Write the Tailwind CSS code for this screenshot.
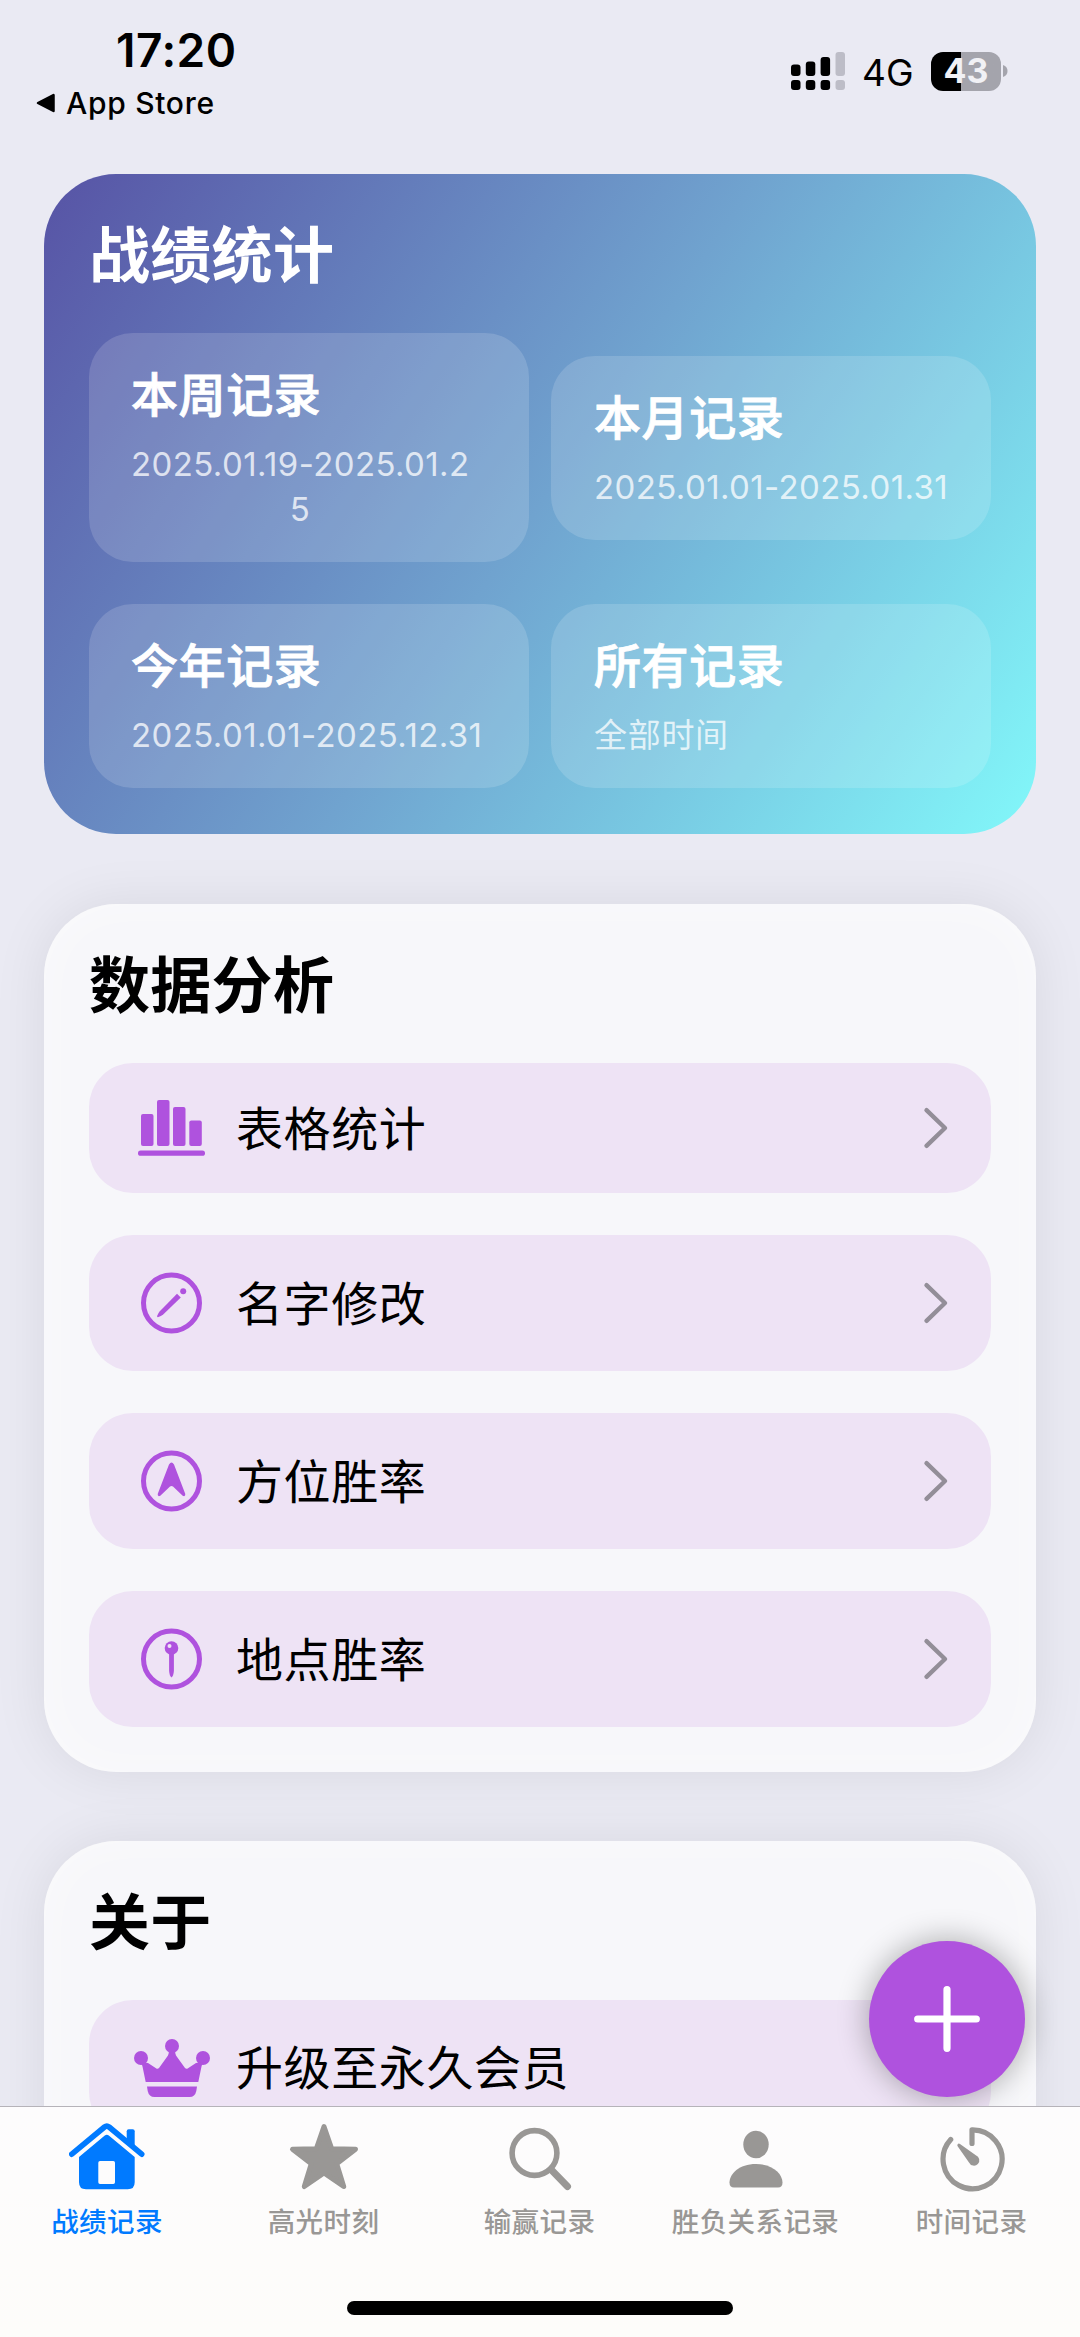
<!DOCTYPE html>
<html lang="zh-CN">
<head>
<meta charset="utf-8">
<title>战绩记录</title>
<script src="https://cdn.jsdelivr.net/npm/@tailwindcss/browser@4"></script>
</head>
<body class="bg-[#eaeaf3]">
<div class="relative flex h-[2337px] w-[1080px] flex-col overflow-hidden bg-[#eaeaf3] font-['Inter','Noto_Sans_CJK_SC',sans-serif] text-black">

  <!-- Scrolling content with status bar -->
  <div class="flex h-[2106px] shrink-0 flex-col overflow-hidden">
    <header class="flex h-[174px] shrink-0 justify-between pl-[35px] pr-[72px]">
      <div class="flex flex-col pt-[25px]">
        <div class="pl-[81px] text-[46px] font-semibold leading-[50px] tracking-[0.5px]">17:20</div>
        <div class="mt-[10px] flex items-center gap-[11px] text-[30px] font-medium leading-[36px] tracking-[0.7px]">
          <svg class="h-[20px] w-[20px]" viewBox="0 0 20 20"><path d="M18.500 2v16L3 10z" fill="#000" stroke="#000" stroke-width="2.500" stroke-linejoin="round"/></svg>
          <span>App Store</span>
        </div>
      </div>
      <div class="mt-[52px] flex h-[38px] items-center">
        <svg class="h-[38px] w-[54px]" viewBox="0 0 54 38">
          <g fill="#000"><rect x="0" y="12.500" width="9.500" height="11.500" rx="3"/><rect x="14.800" y="9.500" width="9.500" height="14.500" rx="3"/><rect x="29.600" y="5" width="9.500" height="19" rx="3"/><rect x="0" y="28" width="9.500" height="10" rx="3"/><rect x="14.800" y="28" width="9.500" height="10" rx="3"/><rect x="29.600" y="28" width="9.500" height="10" rx="3"/></g>
          <g fill="#bdbdc7"><rect x="44.500" y="0" width="9.500" height="24" rx="3"/><rect x="44.500" y="28" width="9.500" height="10" rx="3"/></g>
        </svg>
        <span class="ml-[17px] w-[52px] pt-[4px] text-[37px] leading-[38px]">4G</span>
        <div class="ml-[17px] flex items-center gap-[2px]">
          <div class="flex h-[39px] w-[70px] items-center justify-center rounded-[12px] bg-linear-to-r from-black from-[43%] to-[#a4a4ac] to-[43%] text-[34px] font-bold leading-[38px] text-[#f1f1f5]">43</div>
          <svg class="h-[12px] w-[5px]" viewBox="0 0 5 12"><path d="M0 0c3 .8 4.500 3.200 4.500 6S3 11.200 0 12z" fill="#a4a4ac"/></svg>
        </div>
      </div>
    </header>

    <main class="flex flex-col px-[44px]">
      <!-- Record summary -->
      <section class="h-[660px] rounded-[72px] bg-[linear-gradient(123.7deg,#5753a5_0%,#70a3cf_50%,#82f8fa_100%)] px-[45px] pt-[52px] text-white">
        <h2 class="text-[61px] font-bold leading-[61px] tracking-[0.3px]">战绩统计</h2>
        <div class="mt-[46px] grid grid-cols-2 grid-rows-[229px_184px] items-center gap-x-[22px] gap-y-[42px]">
          <div class="h-[229px] rounded-[44px] bg-white/15 pl-[42px] pt-[38px]">
            <h3 class="text-[47px] font-medium leading-[47px] tracking-[0.6px] [-webkit-text-stroke:0.9px_white]">本周记录</h3>
            <p class="mt-[24px] w-[338px] whitespace-nowrap text-center text-[33px] leading-[44.500px] tracking-[0.4px] text-white/75">2025.01.19-2025.01.2<br>5</p>
          </div>
          <div class="h-[184px] rounded-[44px] bg-white/15 pl-[43px] pt-[38px]">
            <h3 class="text-[47px] font-medium leading-[47px] tracking-[0.6px] [-webkit-text-stroke:0.9px_white]">本月记录</h3>
            <p class="mt-[24px] whitespace-nowrap text-[33px] leading-[44px] tracking-[0.4px] text-white/75">2025.01.01-2025.01.31</p>
          </div>
          <div class="h-[184px] rounded-[44px] bg-white/15 pl-[42px] pt-[38px]">
            <h3 class="text-[47px] font-medium leading-[47px] tracking-[0.6px] [-webkit-text-stroke:0.9px_white]">今年记录</h3>
            <p class="mt-[24px] whitespace-nowrap text-[33px] leading-[44px] tracking-[0.4px] text-white/75">2025.01.01-2025.12.31</p>
          </div>
          <div class="h-[184px] rounded-[44px] bg-white/15 pl-[43px] pt-[38px]">
            <h3 class="text-[47px] font-medium leading-[47px] tracking-[0.6px] [-webkit-text-stroke:0.9px_white]">所有记录</h3>
            <p class="mt-[24px] text-[33px] leading-[44px] tracking-[0.7px] text-white/75">全部时间</p>
          </div>
        </div>
      </section>

      <!-- Data analysis -->
      <section class="mt-[69.500px] rounded-[72px] bg-[#f7f7fa] px-[45px] pb-[45px] pt-[52px] shadow-[0_0_54px_rgba(0,0,0,0.08),inset_0_0_50px_rgba(255,255,255,0.45)]">
        <h2 class="text-[61px] font-bold leading-[61px] tracking-[0.3px]">数据分析</h2>
        <div class="mt-[46.500px] flex flex-col gap-[42px] text-[47px] tracking-[0.6px]">
          <a class="flex h-[130px] items-center rounded-[44px] bg-[#eee3f5] pl-[49px] pr-[42px]">
            <svg class="h-[56px] w-[67px]" viewBox="0 0 67 56" fill="#af52de"><rect x="3" y="14" width="12.500" height="32" rx="2"/><rect x="19" y="0" width="12.500" height="46" rx="2"/><rect x="35" y="7" width="12.500" height="39" rx="2"/><rect x="51.300" y="20.500" width="12.500" height="25.500" rx="2"/><rect x="0" y="50.500" width="67" height="5.300" rx="2.600"/></svg>
            <span class="ml-[31px] flex-1 pt-[2px] leading-[60px]">表格统计</span>
            <svg class="h-[44px] w-[26px]" viewBox="0 0 26 44"><path d="M3.500 4.200 22 22 3.500 39.800" fill="none" stroke="#938e98" stroke-width="4.400" stroke-linecap="round" stroke-linejoin="round"/></svg>
          </a>
          <a class="flex h-[136px] items-center rounded-[44px] bg-[#eee3f5] pl-[49px] pr-[42px]">
            <svg class="h-[62px] w-[67px]" viewBox="0 0 67 62" fill="#af52de"><circle cx="33.500" cy="31" r="28" fill="none" stroke="#af52de" stroke-width="5"/><path d="M39 21.700 42.800 25.400 25.200 42.400Q23 44.300 20.400 45.100Q18.600 45.500 19.200 43.800Q20.200 41 21.800 39.200Z"/><circle cx="45.200" cy="19.200" r="3"/></svg>
            <span class="ml-[31px] flex-1 pt-[2px] leading-[60px]">名字修改</span>
            <svg class="h-[44px] w-[26px]" viewBox="0 0 26 44"><path d="M3.500 4.200 22 22 3.500 39.800" fill="none" stroke="#938e98" stroke-width="4.400" stroke-linecap="round" stroke-linejoin="round"/></svg>
          </a>
          <a class="flex h-[136px] items-center rounded-[44px] bg-[#eee3f5] pl-[49px] pr-[42px]">
            <svg class="h-[62px] w-[67px]" viewBox="0 0 67 62" fill="#af52de"><circle cx="33.500" cy="31" r="28" fill="none" stroke="#af52de" stroke-width="5"/><path d="M31 14.500Q33.500 10.500 36 14.500L47.300 44Q47.500 47 44.700 45.800L35 36.500Q33.500 35.300 32 36.500L22.300 45.800Q19.500 47 19.700 44Z"/></svg>
            <span class="ml-[31px] flex-1 pt-[2px] leading-[60px]">方位胜率</span>
            <svg class="h-[44px] w-[26px]" viewBox="0 0 26 44"><path d="M3.500 4.200 22 22 3.500 39.800" fill="none" stroke="#938e98" stroke-width="4.400" stroke-linecap="round" stroke-linejoin="round"/></svg>
          </a>
          <a class="flex h-[136px] items-center rounded-[44px] bg-[#eee3f5] pl-[49px] pr-[42px]">
            <svg class="h-[62px] w-[67px]" viewBox="0 0 67 62" fill="#af52de"><circle cx="33.500" cy="31" r="28" fill="none" stroke="#af52de" stroke-width="5"/><circle cx="33.500" cy="20" r="6.800"/><circle cx="31.500" cy="18" r="2" fill="#eee3f5"/><path d="M31.100 25H35.900V43Q35.500 48 33.500 49.500Q31.500 48 31.100 43Z"/></svg>
            <span class="ml-[31px] flex-1 pt-[2px] leading-[60px]">地点胜率</span>
            <svg class="h-[44px] w-[26px]" viewBox="0 0 26 44"><path d="M3.500 4.200 22 22 3.500 39.800" fill="none" stroke="#938e98" stroke-width="4.400" stroke-linecap="round" stroke-linejoin="round"/></svg>
          </a>
        </div>
      </section>

      <!-- About -->
      <section class="mt-[69px] h-[420px] rounded-[72px] bg-[#f7f7fa] px-[45px] pt-[52px] shadow-[0_0_54px_rgba(0,0,0,0.08),inset_0_0_50px_rgba(255,255,255,0.45)]">
        <h2 class="text-[61px] font-bold leading-[61px] tracking-[0.3px]">关于</h2>
        <a class="mt-[46px] flex h-[136px] items-center rounded-[44px] bg-[#eee3f5] pl-[45px] pr-[42px] text-[47px] tracking-[0.6px]">
          <svg class="h-[58px] w-[76px]" viewBox="0 0 76 58" fill="#af52de"><circle cx="38" cy="7" r="7"/><circle cx="7" cy="19" r="7"/><circle cx="69" cy="19" r="7"/><path d="M35 11H41Q41 14.500 42 16.500L51 29Q52.300 30.500 54 29.300L62 24 69 23Q68 25.500 67.500 27.500L64.300 43H11.700L8.500 27.500Q8 25.500 7 23L14 24 22 29.300Q23.700 30.500 25 29L34 16.500Q35 14.500 35 11Z"/><path d="M13 47.500H63L62.300 52Q61 58 55.500 58H20.500Q15 58 13.700 52Z"/></svg>
          <span class="ml-[26px] flex-1 leading-[60px]">升级至永久会员</span>
        </a>
      </section>
    </main>
  </div>

  <!-- Add button -->
  <button class="absolute left-[869px] top-[1941px] flex size-[156px] items-center justify-center rounded-full bg-[#af52de] shadow-[0_0_32px_rgba(0,0,0,0.33)]">
    <svg class="size-[66px]" viewBox="0 0 66 66"><path d="M33 3.700V62.300M3.700 33H62.300" stroke="#fff" stroke-width="7.200" stroke-linecap="round"/></svg>
  </button>

  <!-- Tab bar -->
  <nav class="relative flex h-[231px] flex-col items-center border-t border-[#b5b3b9] bg-[linear-gradient(180deg,#fdfcfd,#fdfcfa)]">
    <div class="grid w-full grid-cols-5 text-[27.500px] font-medium leading-[36px] tracking-[0.4px] text-[#999795]">
      <div class="flex flex-col items-center pr-[2px] text-[#007aff]">
        <svg class="mt-[15px] h-[70px] w-[76px]" viewBox="0 0 76 70" fill="#007aff"><path d="M2.800 32.200 35.500 5Q37.800 3.200 40.100 5L72.700 32.200" fill="none" stroke="#007aff" stroke-width="5.600" stroke-linecap="round" stroke-linejoin="round"/><path d="M57.700 9.300Q57.700 7.300 59.700 7.300H63.700Q65.700 7.300 65.700 9.300V25L57.700 19Z"/><path fill-rule="evenodd" d="M35.800 13.600Q37.800 12 39.800 13.600L65.700 35V60.300Q65.700 67.300 58.700 67.300H17Q10 67.300 10 60.300V35ZM31 39Q29.300 39 29.300 40.700V60.300Q29.300 62 31 62H44.300Q46 62 46 60.300V40.700Q46 39 44.300 39Z"/></svg>
        <span class="mt-[12px]">战绩记录</span>
      </div>
      <div class="flex flex-col items-center pr-px">
        <svg class="mt-[15px] h-[70px] w-[72px]" viewBox="0 0 72 70" fill="#999795"><path d="M36 4.500 43.700 26.800 67.500 27.200 48.700 41.700 55.700 64.500 36 51 16.300 64.500 23.300 41.700 4.500 27.200 28.300 26.800Z" stroke="#999795" stroke-width="5" stroke-linejoin="round"/></svg>
        <span class="mt-[12px]">高光时刻</span>
      </div>
      <div class="flex flex-col items-center pr-px">
        <svg class="mt-[15px] h-[70px] w-[64px]" viewBox="0 0 64 70" fill="none" stroke="#999795" stroke-linecap="round"><circle cx="26.500" cy="31" r="22.400" stroke-width="5.600"/><path d="M43.500 48 59.500 64.500" stroke-width="7"/></svg>
        <span class="mt-[12px]">输赢记录</span>
      </div>
      <div class="flex flex-col items-center pr-px">
        <svg class="mt-[15px] h-[70px] w-[54px]" viewBox="0 0 54 70" fill="#999795"><ellipse cx="27" cy="22.500" rx="12.700" ry="13.700"/><path d="M.5 60.500C.5 52 10 42 27 42S53.500 52 53.500 60.500Q53.500 65.500 49 65.500H5Q.5 65.500.5 60.500Z"/></svg>
        <span class="mt-[12px]">胜负关系记录</span>
      </div>
      <div class="flex flex-col items-center pr-px">
        <svg class="mt-[15px] h-[70px] w-[66px]" viewBox="0 0 66 70" fill="none" stroke="#999795" stroke-width="5.200" stroke-linecap="round" stroke-linejoin="round"><path d="M33 21.500V7.800A29.500 29.500 0 1 1 11.700 17.500"/><path d="M18.700 22.200Q19.600 21 21 22L36.800 33.200A5.400 5.400 0 1 1 30 40.500L18.800 24.500Q17.800 23 18.700 22.200Z" fill="#999795" stroke="none"/></svg>
        <span class="mt-[12px]">时间记录</span>
      </div>
    </div>
    <div class="mt-auto mb-[22px] h-[14px] w-[386px] rounded-full bg-black"></div>
  </nav>
</div>
</body>
</html>
